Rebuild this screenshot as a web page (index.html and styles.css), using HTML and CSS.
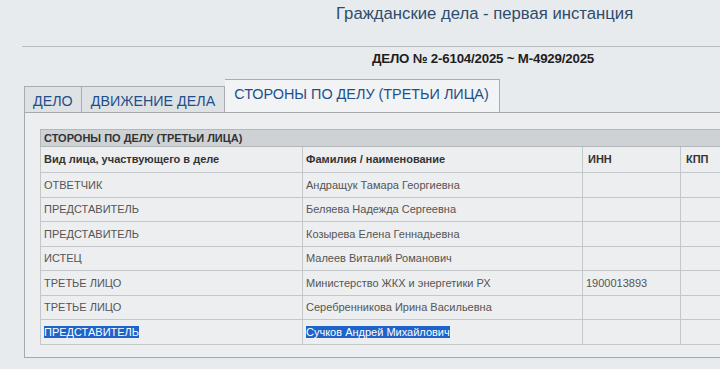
FILE: index.html
```html
<!DOCTYPE html>
<html lang="ru">
<head>
    <meta charset="UTF-8">
    <title>Гражданские дела - первая инстанция</title>
    <link rel="stylesheet" href="styles.css">
</head>
<body>
<div class="page">
    <div class="top">
        <h1 class="title">Гражданские дела - первая инстанция</h1>
    </div>
    <div class="rule"></div>
    <div class="caseNo">ДЕЛО № 2-6104/2025 ~ М-4929/2025</div>
    <div class="tabs">
        <a class="tab">ДЕЛО</a>
        <a class="tab">ДВИЖЕНИЕ ДЕЛА</a>
        <a class="tab active">СТОРОНЫ ПО ДЕЛУ (ТРЕТЬИ ЛИЦА)</a>
    </div>
    <div class="panel">
        <table class="parties">
            <colgroup>
                <col class="colKind">
                <col class="colName">
                <col class="colInn">
                <col>
            </colgroup>
            <tr class="caption">
                <td colspan="4">СТОРОНЫ ПО ДЕЛУ (ТРЕТЬИ ЛИЦА)</td>
            </tr>
            <tr class="head">
                <th>Вид лица, участвующего в деле</th>
                <th>Фамилия / наименование</th>
                <th>ИНН</th>
                <th>КПП</th>
            </tr>
            <tr>
                <td>ОТВЕТЧИК</td>
                <td>Андращук Тамара Георгиевна</td>
                <td></td>
                <td></td>
            </tr>
            <tr>
                <td>ПРЕДСТАВИТЕЛЬ</td>
                <td>Беляева Надежда Сергеевна</td>
                <td></td>
                <td></td>
            </tr>
            <tr>
                <td>ПРЕДСТАВИТЕЛЬ</td>
                <td>Козырева Елена Геннадьевна</td>
                <td></td>
                <td></td>
            </tr>
            <tr>
                <td>ИСТЕЦ</td>
                <td>Малеев Виталий Романович</td>
                <td></td>
                <td></td>
            </tr>
            <tr>
                <td>ТРЕТЬЕ ЛИЦО</td>
                <td>Министерство ЖКХ и энергетики РХ</td>
                <td>1900013893</td>
                <td></td>
            </tr>
            <tr>
                <td>ТРЕТЬЕ ЛИЦО</td>
                <td>Серебренникова Ирина Васильевна</td>
                <td></td>
                <td></td>
            </tr>
            <tr>
                <td><span class="selected">ПРЕДСТАВИТЕЛЬ</span></td>
                <td><span class="selected">Сучков Андрей Михайлович</span></td>
                <td></td>
                <td></td>
            </tr>
        </table>
    </div>
</div>
</body>
</html>
```

FILE: styles.css
```css
html, body {
    margin: 0;
    padding: 0;
}

body {
    background: #e8ebee;
    font-family: "Liberation Sans", Arial, sans-serif;
    color: #555;
}

.page {
    width: 720px;
}

.top {
    display: flex;
    padding: 4px 0 0 336px;
    height: 42px;
}

.title {
    margin: 0;
    font-size: 16.7px;
    font-weight: normal;
    color: #2f4d6b;
}

.rule {
    margin-left: 22px;
    border-top: 1px solid #b9bdc1;
}

.caseNo {
    padding: 4px 0 0 372px;
    height: 28px;
    font-size: 13.3px;
    font-weight: bold;
    color: #1e1e1e;
    letter-spacing: -0.2px;
}

.tabs {
    display: flex;
    align-items: flex-end;
    margin-left: 24px;
    height: 33px;
}

.tab {
    display: block;
    height: 25px;
    line-height: 28px;
    padding: 0 9px;
    background: #dfe2e5;
    border: 1px solid #a9adb1;
    border-bottom: none;
    border-left: none;
    font-size: 14.3px;
    color: #1f4f8a;
}

.tab:first-child {
    border-left: 1px solid #a9adb1;
    padding: 0 8px;
}

.tab.active {
    height: 32px;
    line-height: 29px;
    padding: 0 10px 0 9px;
    background: #f1f3f5;
    font-size: 14.4px;
}

.panel {
    margin-left: 24px;
    padding: 16px 0 12px 15px;
    border: 1px solid #a5a9ad;
    border-right: none;
    background: #eceef0;
}

.parties {
    border-collapse: collapse;
    width: 100%;
    font-size: 11px;
}

.colKind { width: 262px; }
.colName { width: 280px; }
.colInn { width: 98px; }

.parties td, .parties th {
    border: 1px solid #c4c7ca;
    text-align: left;
    padding: 0 3px;
    height: 23.5px;
    white-space: nowrap;
}

.parties tr td:last-child, .parties tr th:last-child {
    border-right: none;
}

.parties tr.caption td {
    height: 16px;
    background: #cfd2d5;
    font-weight: bold;
    color: #333;
    border-color: #b5b8bb;
}

.parties th {
    height: 24px;
    padding-bottom: 1px;
    font-weight: bold;
    color: #333;
}

.parties th:nth-child(3), .parties th:nth-child(4) {
    padding-left: 5px;
}

.selected {
    background: #1d63c9;
    color: #fff;
}
```
